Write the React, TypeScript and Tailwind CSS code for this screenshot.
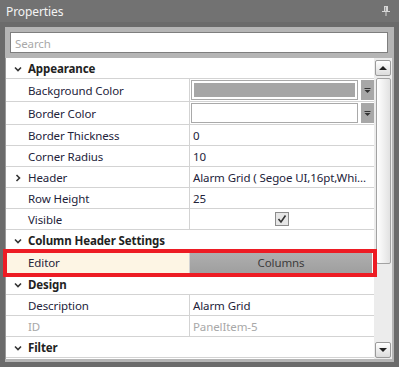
import React from 'react';

type Row =
  | { kind: 'cat'; label: string }
  | { kind: 'prop'; label: string; value?: React.ReactNode; h?: string; expand?: boolean; muted?: boolean; hl?: boolean };

const PinIcon = () => (
  <svg width="8" height="10" viewBox="0 0 8 10" className="block">
    <rect x="2" y="0" width="4" height="5" fill="#d6d6d6" />
    <rect x="3" y="1" width="1" height="4" fill="#9a9a9a" />
    <rect x="0" y="5" width="8" height="1" fill="#d6d6d6" />
    <rect x="3.5" y="6" width="1" height="4" fill="#d6d6d6" />
  </svg>
);

const ChevronDown = () => (
  <svg width="8" height="6" viewBox="0 0 8 6" className="block">
    <path d="M1 1.5 L4 4.5 L7 1.5" fill="none" stroke="#333" strokeWidth="1.6" />
  </svg>
);

const ChevronRight = () => (
  <svg width="6" height="8" viewBox="0 0 6 8" className="block">
    <path d="M1.5 1 L4.5 4 L1.5 7" fill="none" stroke="#333" strokeWidth="1.6" />
  </svg>
);

const DropArrow = () => (
  <svg width="7" height="5" viewBox="0 0 7 5" className="block">
    <rect x="0.5" y="0" width="6" height="1" fill="#333" />
    <path d="M0.5 2 L6.5 2 L3.5 5 Z" fill="#333" />
  </svg>
);

// value with a combo box look (colour pickers)
const ColorCombo = ({ filled }: { filled?: boolean }) => (
  <div className="flex items-stretch h-full py-px pl-px">
    <div className="flex-1 border border-[#a9a9a9] p-[2px] bg-white">
      <div className={`h-full ${filled ? 'bg-[#a6a6a6]' : 'bg-white'}`} />
    </div>
    <div className="w-[13px] ml-[3px] bg-[#a7a7a7] flex items-center justify-center">
      <DropArrow />
    </div>
  </div>
);

const CheckBox = () => (
  <div className="w-[14px] h-[14px] border border-[#8c8c8c] bg-[#e6e6e6] flex items-center justify-center">
    <svg width="10" height="10" viewBox="0 0 10 10">
      <path d="M1.5 5 L4 8 L8.5 1.5" fill="none" stroke="#333" strokeWidth="1.6" />
    </svg>
  </div>
);

const rows: Row[] = [
  { kind: 'cat', label: 'Appearance' },
  { kind: 'prop', label: 'Background Color', value: <ColorCombo filled />, h: 'h-[23px]' },
  { kind: 'prop', label: 'Border Color', value: <ColorCombo />, h: 'h-[23px]' },
  { kind: 'prop', label: 'Border Thickness', value: '0' },
  { kind: 'prop', label: 'Corner Radius', value: '10' },
  { kind: 'prop', label: 'Header', value: 'Alarm Grid ( Segoe UI,16pt,Whi...', expand: true },
  { kind: 'prop', label: 'Row Height', value: '25' },
  {
    kind: 'prop',
    label: 'Visible',
    value: (
      <div className="h-full flex items-center justify-center">
        <CheckBox />
      </div>
    ),
  },
  { kind: 'cat', label: 'Column Header Settings' },
  {
    kind: 'prop',
    label: 'Editor',
    h: 'h-[23px]',
    hl: true,
    value: (
      <div className="h-full pr-[2px]">
        <div className="h-full bg-gradient-to-b from-[#b0b0b0] to-[#9f9f9f] flex items-center justify-center pt-[2px] text-[#3c3c3c]">
          Columns
        </div>
      </div>
    ),
  },
  { kind: 'cat', label: 'Design' },
  { kind: 'prop', label: 'Description', value: 'Alarm Grid' },
  { kind: 'prop', label: 'ID', value: 'PanelItem-5', muted: true },
  { kind: 'cat', label: 'Filter' },
];

export default function App() {
  return (
    <div className="relative w-[399px] h-[367px] bg-[#6b6b6b] flex flex-col font-['Noto_Sans',sans-serif] text-[11.5px] tracking-[-0.1px] text-[#23233a]">
      {/* Title bar */}
      <div className="h-[22px] shrink-0 bg-[#727272] flex items-center justify-between pl-[6px] pr-[9px]">
        <span className="text-[12px] text-[#f4f4f4] leading-none pt-px">Properties</span>
        <PinIcon />
      </div>

      <div className="flex-1 min-h-0 pt-[5px] pl-[5px] pr-[5px] pb-[5px]">
        <div className="h-full bg-[#b5b5b5] flex flex-col pr-[2px] pb-[3px]">
          {/* Search */}
          <div className="pt-[5px] pl-[5px] pr-[4px] pb-[5px]">
            <div className="h-[21px] border border-[#7e7e7e] bg-white flex items-center px-[4px] pt-[2px] text-[#a9a9a9]">
              Search
            </div>
          </div>

          {/* Grid */}
          <div className="flex-1 min-h-0 flex border-l border-[#9a9a9a] bg-white overflow-hidden">
            <div className="flex-1 flex flex-col">
              {rows.map((r, i) =>
                r.kind === 'cat' ? (
                  <div key={i} className="h-[21px] shrink-0 flex items-center border-b border-[#d3d3d3]">
                    <div className="w-[21px] flex justify-center pl-[2px] pt-[2px]">
                      <ChevronDown />
                    </div>
                    <span className="font-bold text-[#222] pl-px pt-[2px]">{r.label}</span>
                  </div>
                ) : (
                  <div
                    key={i}
                    className={`${r.h ?? 'h-[21px]'} shrink-0 flex border-b border-[#d3d3d3] ${r.hl ? 'bg-[#fdf5e4]' : ''}`}
                  >
                    <div className="w-[21px] flex items-center justify-center pl-[2px] pt-[2px]">
                      {r.expand && <ChevronRight />}
                    </div>
                    <div
                      className={`w-[163px] flex items-center pl-px pt-[2px] border-r border-[#d3d3d3] ${
                        r.muted ? 'text-[#a8a8a8]' : ''
                      }`}
                    >
                      {r.label}
                    </div>
                    <div
                      className={`flex-1 min-w-0 bg-white ${
                        typeof r.value === 'string' ? 'flex items-center pl-[3px] pt-[2px] whitespace-nowrap' : ''
                      } ${r.muted ? 'text-[#a8a8a8]' : ''}`}
                    >
                      {r.value}
                    </div>
                  </div>
                )
              )}
            </div>

            {/* Scrollbar */}
            <div className="w-[18px] shrink-0 bg-[#ececec] flex flex-col items-center pt-[2px] pb-px">
              <div className="w-[16px] h-[16px] rounded-[2px] border border-[#9a9a9a] bg-gradient-to-b from-white to-[#dcdcdc] flex items-center justify-center">
                <svg width="8" height="4" viewBox="0 0 8 4">
                  <path d="M0 4 L4 0 L8 4 Z" fill="#222" />
                </svg>
              </div>
              <div className="w-[15px] h-[186px] mt-[2px] rounded-[2px] border border-[#a2a2a2] bg-gradient-to-r from-white to-[#e2e2e2]" />
              <div className="flex-1" />
              <div className="w-[16px] h-[16px] rounded-[2px] border border-[#9a9a9a] bg-gradient-to-b from-white to-[#dcdcdc] flex items-center justify-center">
                <svg width="8" height="4" viewBox="0 0 8 4">
                  <path d="M0 0 L8 0 L4 4 Z" fill="#222" />
                </svg>
              </div>
            </div>
          </div>
        </div>
      </div>

      {/* Selection highlight around the Editor row */}
      <div className="absolute left-[3px] top-[249px] w-[374px] h-[28px] border-[4px] border-[#ed1c24] pointer-events-none" />
    </div>
  );
}
